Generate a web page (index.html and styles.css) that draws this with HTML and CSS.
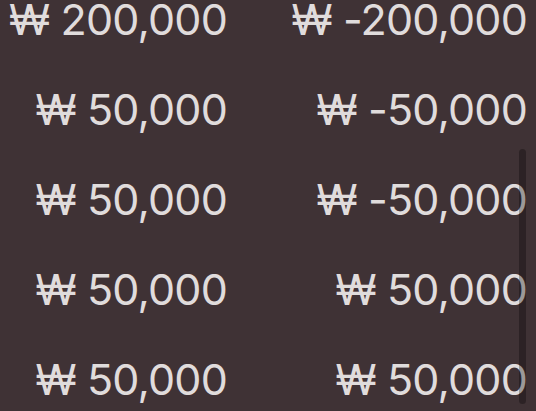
FILE: index.html
```html
<!DOCTYPE html>
<html lang="ko">
<head>
<meta charset="utf-8">
<link rel="stylesheet" href="styles.css">
</head>
<body>
<div class="viewport">
  <div class="list">
    <div class="row"><span class="amt">₩ 200,000</span><span class="amt">₩ -200,000</span></div>
    <div class="row"><span class="amt">₩ 50,000</span><span class="amt">₩ -50,000</span></div>
    <div class="row"><span class="amt">₩ 50,000</span><span class="amt">₩ -50,000</span></div>
    <div class="row"><span class="amt">₩ 50,000</span><span class="amt">₩ 50,000</span></div>
    <div class="row"><span class="amt">₩ 50,000</span><span class="amt">₩ 50,000</span></div>
  </div>
  <div class="scrollbar"></div>
</div>
</body>
</html>
```
FILE: styles.css
```css
html, body {
  margin: 0;
  padding: 0;
  background: #3f3235;
  overflow: hidden;
}
.viewport {
  position: relative;
  width: 536px;
  height: 411px;
  overflow: hidden;
  background: #3f3235;
}
.list {
  display: flex;
  flex-direction: column;
  margin-top: -26px;
}
.row {
  display: grid;
  grid-template-columns: 227px 300px;
  height: 90px;
  line-height: 90px;
}
.amt {
  text-align: right;
  font-family: Inter, "Noto Sans", sans-serif;
  font-size: 43px;
  letter-spacing: -0.8px;
  color: #e0dcdc;
  white-space: nowrap;
}
.scrollbar {
  position: absolute;
  left: 519px;
  top: 149px;
  width: 7px;
  height: 255px;
  border-radius: 4px;
  background: rgba(0, 0, 0, 0.3);
}
```
